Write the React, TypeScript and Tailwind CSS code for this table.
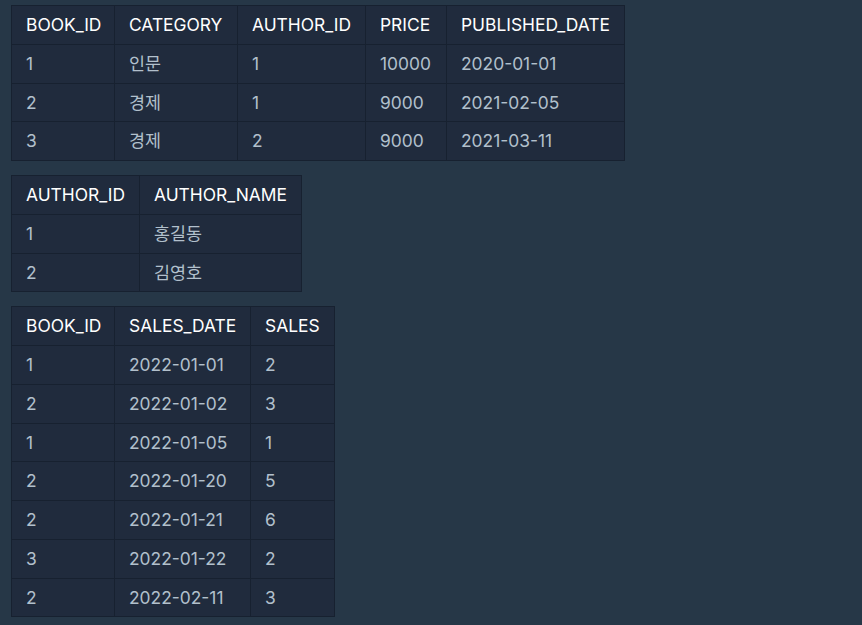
import React from "react";

type T = { width: string; cols: string[]; head: string[]; rows: string[][] };

const tables: T[] = [
  {
    width: "w-[613px]",
    cols: ["w-[103px]", "w-[123px]", "w-[128px]", "w-[81px]", "w-[178px]"],
    head: ["BOOK_ID", "CATEGORY", "AUTHOR_ID", "PRICE", "PUBLISHED_DATE"],
    rows: [
      ["1", "인문", "1", "10000", "2020-01-01"],
      ["2", "경제", "1", "9000", "2021-02-05"],
      ["3", "경제", "2", "9000", "2021-03-11"],
    ],
  },
  {
    width: "w-[290px]",
    cols: ["w-[128px]", "w-[162px]"],
    head: ["AUTHOR_ID", "AUTHOR_NAME"],
    rows: [
      ["1", "홍길동"],
      ["2", "김영호"],
    ],
  },
  {
    width: "w-[323px]",
    cols: ["w-[103px]", "w-[136px]", "w-[84px]"],
    head: ["BOOK_ID", "SALES_DATE", "SALES"],
    rows: [
      ["1", "2022-01-01", "2"],
      ["2", "2022-01-02", "3"],
      ["1", "2022-01-05", "1"],
      ["2", "2022-01-20", "5"],
      ["2", "2022-01-21", "6"],
      ["3", "2022-01-22", "2"],
      ["2", "2022-02-11", "3"],
    ],
  },
];

function Table({ t }: { t: T }) {
  return (
    <table className={`border-collapse bg-[#202b3d] table-fixed ${t.width}`}>
      <colgroup>
        {t.cols.map((w, i) => (
          <col key={i} className={w} />
        ))}
      </colgroup>
      <thead>
        <tr>
          {t.head.map((h) => (
            <th
              key={h}
              className="border border-[#172130] px-[14px] py-[7px] text-left font-normal text-white text-[17.4px] leading-[23.75px] whitespace-nowrap"
            >
              {h}
            </th>
          ))}
        </tr>
      </thead>
      <tbody>
        {t.rows.map((r, i) => (
          <tr key={i}>
            {r.map((c, j) => (
              <td
                key={j}
                className="border border-[#172130] px-[14px] py-[7px] text-left text-[#b2c0cc] text-[17.4px] leading-[23.75px] whitespace-nowrap"
              >
                {c}
              </td>
            ))}
          </tr>
        ))}
      </tbody>
    </table>
  );
}

export default function App() {
  return (
    <div className="w-[862px] h-[625px] bg-[#263747] pl-[11px] pt-[5px] flex flex-col items-start gap-[14px] font-['Inter','Noto_Sans_CJK_KR',sans-serif]">
      {tables.map((t, i) => (
        <Table key={i} t={t} />
      ))}
    </div>
  );
}
